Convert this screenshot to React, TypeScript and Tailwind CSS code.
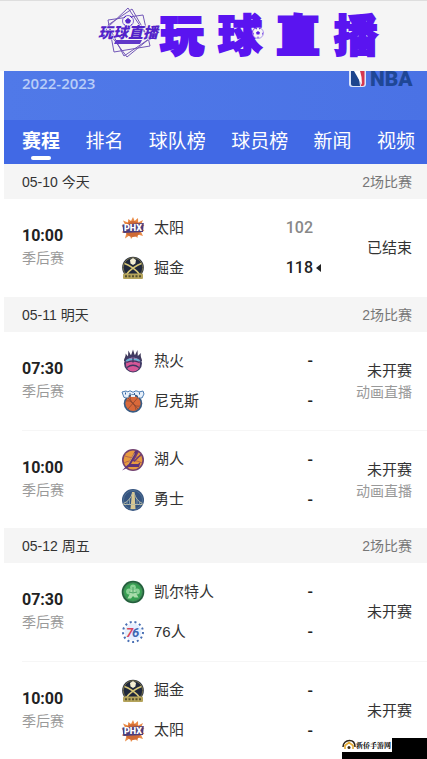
import React from 'react';

type TeamId = 'suns' | 'nuggets' | 'heat' | 'knicks' | 'lakers' | 'warriors' | 'celtics' | 'sixers';

interface Side {
  team: TeamId;
  score?: number;
}

interface Match {
  time: string;
  sides: [Side, Side];
  status: string;
  live?: boolean;
}

interface Day {
  date: string;
  total: number;
  matches: Match[];
}

const TEAM_NAMES: Record<TeamId, string> = {
  suns: '太阳',
  nuggets: '掘金',
  heat: '热火',
  knicks: '尼克斯',
  lakers: '湖人',
  warriors: '勇士',
  celtics: '凯尔特人',
  sixers: '76人',
};

const TABS = ['赛程', '排名', '球队榜', '球员榜', '新闻', '视频'];

const DAYS: Day[] = [
  {
    date: '05-10 今天',
    total: 2,
    matches: [
      { time: '10:00', sides: [{ team: 'suns', score: 102 }, { team: 'nuggets', score: 118 }], status: '已结束' },
    ],
  },
  {
    date: '05-11 明天',
    total: 2,
    matches: [
      { time: '07:30', sides: [{ team: 'heat' }, { team: 'knicks' }], status: '未开赛', live: true },
      { time: '10:00', sides: [{ team: 'lakers' }, { team: 'warriors' }], status: '未开赛', live: true },
    ],
  },
  {
    date: '05-12 周五',
    total: 2,
    matches: [
      { time: '07:30', sides: [{ team: 'celtics' }, { team: 'sixers' }], status: '未开赛' },
      { time: '10:00', sides: [{ team: 'nuggets' }, { team: 'suns' }], status: '未开赛' },
    ],
  },
];

const LOGOS: Record<TeamId, React.ReactNode> = {
  suns: (
    <>
      <path
        d="M12 1l1.6 4L17 2l.2 4.4L22 4l-2 4.5 3.4.5-2.6 3 2.6 3-3.6.6L22 20l-5-1.6-.6 3.6-3.2-3L10 23l-1-4-5 3.4L5.4 17 .8 16.4 3.4 13 .6 9.6l3.6-.8L2 4.4l4.8 2L7.400 3 10 5z"
        fill="#ea8a45"
      />
      <circle cx="12" cy="13" r="8" fill="#cf6a35" />
      <path d="M1.500 8.600L22.800 7 22 16 2.300 17z" fill="#4b3d7c" />
      <text x="12" y="15.300" textAnchor="middle" fontSize="9" fontWeight="900" fontFamily="Roboto, sans-serif" fill="#fff">
        PHX
      </text>
    </>
  ),
  nuggets: (
    <>
      <circle cx="12" cy="11.500" r="10.800" fill="#20283b" />
      <circle cx="12" cy="11.500" r="9.800" fill="none" stroke="#8b834f" strokeWidth=".8" />
      <path d="M3.500 7.500c4 1 12 6.500 15 11M20.500 7.500c-4 1-12 6.500-15 11" stroke="#d8c878" strokeWidth="1.600" fill="none" />
      <path d="M9 4l3-2 3 2-.6 3.600L12 9 9.500 7.600z" fill="#f3eed2" />
      <rect x="2" y="17.500" width="20" height="5.500" rx="1" fill="#b5a45c" />
      <path d="M4 20.200h2m1.500 0h2m1.500 0h2m1.500 0h2m1.500 0h2" stroke="#55502f" strokeWidth="2" />
    </>
  ),
  heat: (
    <>
      <path
        d="M3 12C3 9 5 8 4.600 4.500L7 7.500 7.400 1.500 10 6.500 12 .5l1.800 6L16.500 1l.3 6L20 4c-1 4 1 5 1 8z"
        fill="#403a5b"
      />
      <circle cx="12" cy="14.500" r="9" fill="#403a65" />
      <path d="M4.500 12.500C6 7.500 18 7.500 19.500 12.500c-4-2-10-2-15 0z" fill="#5bb5d5" />
      <circle cx="12" cy="15.500" r="7" fill="#d65797" />
      <path d="M5 12.500C7 8 17 8 19 12.500c-4-1.500-10-1.500-14 0z" fill="#67b9d8" />
      <path d="M5.500 13.500c4-2 9-2 13 0M6 18.500c4-3 8-3 12 0M12 8.500v5" stroke="#3d3762" strokeWidth="1.300" fill="none" />
    </>
  ),
  knicks: (
    <>
      <path
        d="M1 3l4-1 2 1 1-1h2l1 1h2l1-1h2l2 1 4-1 1 3-2 4-6-1H8L3 8.500z"
        fill="#e8f0fa"
        stroke="#4c7db4"
        strokeWidth="1"
      />
      <path d="M4 4.500h1M8.500 5h1M13 5h1M18 4.500h1" stroke="#2e62a0" strokeWidth="2" />
      <circle cx="12" cy="14.500" r="9.300" fill="#385b83" />
      <circle cx="12" cy="14.500" r="7.600" fill="#d9693a" />
      <path
        d="M7 9l10 11M17 8.500L7 20M5 12c5-1 9 2 10 9M19 17c-5 1-9-2-10-9"
        stroke="#8c4630"
        strokeWidth=".8"
        fill="none"
      />
      <path d="M4.500 7.500h3M10 7h4M17 7.500h3" stroke="#e8f0fa" strokeWidth="2" />
    </>
  ),
  lakers: (
    <>
      <circle cx="12" cy="12" r="11" fill="#71406f" />
      <circle cx="12" cy="12" r="9.400" fill="#e79a3f" />
      <path d="M4 8c5 2 11 2 16 0M3 15c5-3 13-3 18 0" stroke="#b8644c" strokeWidth="1" fill="none" />
      <path d="M14 3h3.500L10 16h7l2.500-2-1.500 5H8L1 22.500 6.500 17z" fill="#5d3278" />
      <path d="M20.500 6L13 13.500M17 4l-5 9" stroke="#6c3c78" strokeWidth="1.500" />
      <path d="M13.500 5.500L7 16.500" stroke="#f0bd62" strokeWidth=".8" />
    </>
  ),
  warriors: (
    <>
      <circle cx="12" cy="12" r="11" fill="#35547f" />
      <circle cx="12" cy="12" r="9.500" fill="none" stroke="#5d7c9b" strokeWidth=".7" />
      <path d="M11 4h2.500l1 17h-5z" fill="#d8c891" />
      <path d="M2.500 15.500C7 13.500 10 10 11.500 5M13 5c1.500 5 4 8.500 8.500 10.500M2.500 16.500h19" stroke="#b9bba3" strokeWidth="1" fill="none" />
      <path d="M6 13v4M8.500 11v6M16 11v6M18.500 13v4" stroke="#8ea4af" strokeWidth=".8" />
    </>
  ),
  celtics: (
    <>
      <circle cx="12" cy="12" r="11.300" fill="#225f3b" />
      <circle cx="12" cy="12" r="9" fill="#37a052" />
      <circle cx="12" cy="12" r="9.300" fill="none" stroke="#63a875" strokeWidth=".5" />
      <circle cx="12" cy="7.500" r="2.900" fill="#8bd096" />
      <circle cx="8" cy="11.500" r="2.900" fill="#8bd096" />
      <circle cx="16" cy="11.500" r="2.900" fill="#8bd096" />
      <path d="M10 10h4l1.500 4 2 3.500h-4L12 16l-2 2.500H6.500l2-4z" fill="#a9dcaa" />
      <path d="M12 7v6M8 12l4 1 4-1" stroke="#4ba564" strokeWidth="1" fill="none" />
    </>
  ),
  sixers: (
    <>
      <circle cx="12" cy="12" r="8.500" fill="#e5efff" />
      <circle cx="12" cy="12" r="10" fill="none" stroke="#4a70b4" strokeWidth="2" strokeDasharray="2 2.830" />
      <text x="8.500" y="16.500" textAnchor="middle" fontSize="13" fontWeight="700" fontStyle="italic" fontFamily="Roboto, sans-serif" fill="#d9435b">
        7
      </text>
      <text x="14.700" y="16.500" textAnchor="middle" fontSize="13" fontWeight="700" fontStyle="italic" fontFamily="Roboto, sans-serif" fill="#3c66b1">
        6
      </text>
    </>
  ),
};

const Football = ({ className }: { className?: string }) => (
  <svg viewBox="0 0 12 12" className={className} aria-hidden="true">
    <circle cx="6" cy="6" r="5.500" fill="#f5f5f5" stroke="#8764e8" strokeWidth=".6" />
    <path
      d="M6 4l2 1.400-.7 2.200H4.700L4 5.400zM3 1.500l2-.8-.3 1.800zM9 1.500L7 .7l.3 1.800zM.8 5l1 1.500-.6 2zM11.200 5l-1 1.500.6 2zM4.500 10.500L6 9.500l1.500 1z"
      fill="#5a1be0"
    />
  </svg>
);

const Emblem = () => (
  <svg viewBox="0 0 64 52" className="h-[52px] w-16 shrink-0" aria-hidden="true">
    <g fill="none" stroke="#7257b8" strokeWidth="1">
      <path d="M32 1L53 32 31 50 10 22z" />
      <path d="M12 13L47 8l7 31-36 6z" />
      <path d="M12 18l24-16 17 30-25 17z" />
    </g>
    <circle cx="32" cy="14" r="5.500" fill="#f5f5f5" stroke="#6742c9" strokeWidth=".8" />
    <path d="M32 11.500l2.500 2-1 2.500h-3l-1-2.500zM28 11l2-2M36 11l-2-2M28 17.500l1.500 1M36 17.500l-1.500 1" fill="#5428c8" stroke="#5428c8" />
    <text
      x="32"
      y="31"
      textAnchor="middle"
      fontSize="15"
      fontWeight="900"
      fontStyle="italic"
      fontFamily="'Noto Sans CJK SC', sans-serif"
      fill="#5223c9"
      stroke="#f5f5f5"
      strokeWidth="1"
      paintOrder="stroke"
    >
      玩球直播
    </text>
    <path d="M20 33h26l-2 4H18z" fill="#6038c8" />
  </svg>
);

const Banner = () => (
  <header className="flex h-[71px] items-start border-t border-[#dedede] bg-[#f5f5f5] pt-1.5 pl-24">
    <Emblem />
    <h1 className="relative flex gap-3.5 font-['Noto_Sans_CJK_SC',sans-serif] text-[44px] leading-[52px] font-black text-[#5a14f0] [-webkit-text-stroke:2px_#5a14f0]">
      <span>玩</span>
      <span>球</span>
      <span>直</span>
      <span>播</span>
      <Football className="absolute top-5 left-[92px] size-3" />
    </h1>
  </header>
);

const LeagueMark = () => (
  <svg viewBox="0 0 66 18" className="h-[18px] w-[66px]" role="img" aria-label="NBA">
    <path d="M1 0h17v13a3 3 0 0 1-3 3H4a3 3 0 0 1-3-3z" fill="#dce5fa" />
    <path d="M3 0h5l3 8 1 7H5a2 2 0 0 1-2-2z" fill="#1d458e" />
    <path d="M12 0h4.500v13a2 2 0 0 1-2 2H13z" fill="#d6374f" />
    <path d="M6 0h6l1.500 6L14 14l-4-7z" fill="#fff" />
    <text x="22" y="15" fontSize="21" fontWeight="900" fontFamily="Roboto, sans-serif" fill="#1f4796">
      NBA
    </text>
  </svg>
);

const MatchRow: React.FC<{ match: Match; divided: boolean }> = ({ match, divided }) => {
  const best = Math.max(...match.sides.map((s) => s.score ?? 0));

  return (
    <li className="pl-[18px]">
      <div className={`flex h-[98px] items-center pr-[15px] ${divided ? 'border-t border-[#f6f6f6]' : ''}`}>
        <div className="w-[99px] shrink-0 pb-1">
          <div className="font-[Roboto,sans-serif] text-base leading-6 font-bold text-[#222]">{match.time}</div>
          <div className="text-sm leading-5 text-[#999]">季后赛</div>
        </div>
        <div className="flex flex-1 flex-col gap-4">
          {match.sides.map((side) => (
            <div key={side.team} className="flex h-6 items-center">
              <svg viewBox="0 0 24 24" className="size-6 shrink-0" aria-hidden="true">
                {LOGOS[side.team]}
              </svg>
              <span className="ml-[9px] flex-1 text-[15px] text-[#333]">{TEAM_NAMES[side.team]}</span>
              <span
                className={`font-[Roboto,sans-serif] text-base font-medium ${
                  side.score && side.score < best ? 'text-[#888]' : 'text-[#222]'
                }`}
              >
                {side.score ?? '-'}
              </span>
              <span className="flex w-2 justify-end">
                {side.score === best && (
                  <svg viewBox="0 0 5 8" className="h-2 w-[5px]" aria-hidden="true">
                    <path d="M5 0v8L0 4z" fill="#222" />
                  </svg>
                )}
              </span>
            </div>
          ))}
        </div>
        <div className="w-[91px] shrink-0 text-right">
          <div className="text-[15px] leading-[22px] text-[#333]">{match.status}</div>
          {match.live && (
            <a href="#live" className="block text-sm leading-5 text-[#999]">
              动画直播
            </a>
          )}
        </div>
      </div>
    </li>
  );
};

const SiteBadge = () => (
  <div className="absolute right-0 bottom-0 flex h-[21px] w-[85px] items-start bg-black">
    <div className="flex h-3.5 items-center bg-white pr-px">
      <svg viewBox="0 0 14 12" className="h-3 w-3.5" aria-hidden="true">
        <path d="M1 8C1 4 4 1.500 7.500 1.500S13 4 13 8" stroke="#2d261b" strokeWidth="1.500" fill="none" />
        <path d="M3 10V6.500L7 3.500l4 3V10" stroke="#e5ad36" strokeWidth="1.600" fill="none" />
        <circle cx="7" cy="8.500" r="1.500" fill="#3a2a13" />
      </svg>
      <span className="font-['Noto_Serif_CJK_SC','Noto_Sans_CJK_SC',serif] text-[7px] leading-3 font-bold whitespace-nowrap text-black">
        新侨手游网
      </span>
    </div>
  </div>
);

const App: React.FC = () => {
  return (
    <div className="relative bg-white font-['Liberation_Sans','Noto_Sans_CJK_SC',sans-serif]">
      <Banner />
      <main className="pl-1">
        <div className="flex h-[49px] items-start justify-between bg-linear-to-r from-[#5079e8] to-[#4a72e5] pr-[13px] pl-[18px]">
          <span className="font-['Open_Sans',sans-serif] text-[15px] leading-6 font-semibold text-[#b9cdf8]">2022-2023</span>
          <LeagueMark />
        </div>
        <nav className="flex h-11 justify-between bg-[#4169e5] pr-3 pl-[18px]">
          {TABS.map((tab, index) => (
            <a
              key={tab}
              href={`#${tab}`}
              className={`flex flex-col items-center pt-2 text-[19px] leading-7 whitespace-nowrap text-white ${
                index === 0 ? 'font-bold' : ''
              }`}
            >
              {tab}
              {index === 0 && <span className="h-1 w-5 rounded-full bg-white" />}
            </a>
          ))}
        </nav>
        {DAYS.map((day) => (
          <section key={day.date}>
            <div className="flex h-[35px] items-center justify-between bg-[#f5f5f5] pr-[15px] pl-[18px] text-sm">
              <h2 className="text-[#333]">{day.date}</h2>
              <span className="text-[#777]">{day.total}场比赛</span>
            </div>
            <ul>
              {day.matches.map((match, index) => (
                <MatchRow key={match.time} match={match} divided={index > 0} />
              ))}
            </ul>
          </section>
        ))}
      </main>
      <SiteBadge />
    </div>
  );
};

export default App;
